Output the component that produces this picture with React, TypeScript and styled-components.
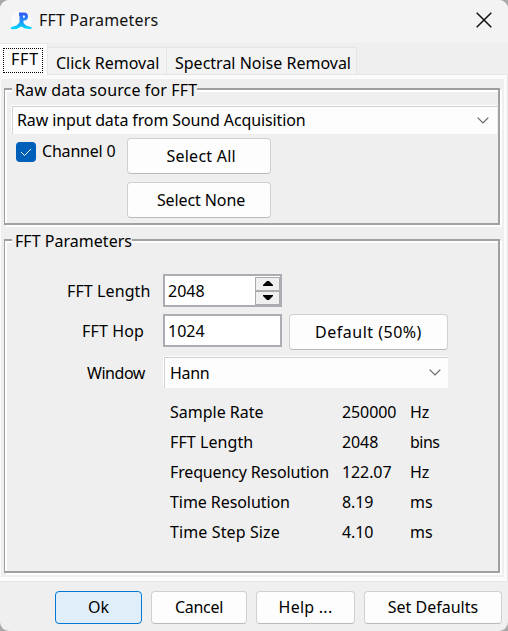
import React from "react";
import styled, { createGlobalStyle, css } from "styled-components";

const Global = createGlobalStyle`
  * { box-sizing: border-box; }
  html, body { margin: 0; padding: 0; background: #a9a9a9; }
  body { font: 16px/20px "Noto Sans", "DejaVu Sans Condensed", sans-serif; color: #000; }
  button { font: inherit; color: inherit; }
`;

const Dialog = styled.div`
  width: 508px;
  height: 631px;
  display: flex;
  flex-direction: column;
  background: #efefef;
  border-radius: 9px;
  overflow: hidden;
`;

const Text = styled.span<{ $track?: number }>`
  white-space: pre;
  letter-spacing: ${(p) => p.$track ?? 0}px;
`;

const TitleBar = styled.header`
  height: 43px;
  flex: none;
  display: flex;
  align-items: center;
  padding: 0 16px 3px 11px;
  background: #f3f3f3;
`;

const Title = styled(Text)`
  flex: 1;
  margin-left: 7px;
  color: #111;
`;

const Tabs = styled.nav`
  height: 32px;
  flex: none;
  display: flex;
  align-items: flex-end;
  padding-top: 1px;
  border-bottom: 1px solid #e5e5e5;
`;

const Tab = styled.div<{ $w: number; $active?: boolean }>`
  width: ${(p) => p.$w}px;
  height: 27px;
  display: flex;
  align-items: center;
  padding: 3px 0 0 8px;
  background: #f3f3f3;
  border: 1px solid #e5e5e5;
  border-width: 1px 1px 0 0;
  ${(p) =>
    p.$active &&
    css`
      height: 32px;
      margin-bottom: -1px;
      padding: 2px 0 0 3px;
      background: #fbfbfb;
    `}
`;

const Focus = styled.div`
  width: 40px;
  height: 25px;
  padding: 0 0 0 7px;
  border: 1px dotted #000;
`;

const Pane = styled.main`
  height: 507px;
  flex: none;
  padding: 4px 3px 4px 1px;
  background: #fbfbfb;
  border-right: 1px solid #e5e5e5;
  border-bottom: 1px solid #e5e5e5;
`;

const PaneBody = styled.div`
  height: 498px;
  padding: 9px 4px 0 3px;
  background: #efefef;
`;

const Group = styled.section<{ $h: number }>`
  width: 496px;
  height: ${(p) => p.$h}px;
  margin-bottom: 14px;
  border: 2px solid #a0a0a0;
  border-left-width: 1px;
  box-shadow: 2px 2px 0 #fff, inset 2px 2px 0 #fff;
`;

const Legend = styled.div<{ $w: number }>`
  width: ${(p) => p.$w}px;
  height: 20px;
  margin: -10px 0 0 7px;
  padding-left: 3px;
  background: #efefef;
`;

const Button = styled.button<{ $w: number; $h?: number; $primary?: boolean }>`
  width: ${(p) => p.$w}px;
  height: ${(p) => p.$h ?? 36}px;
  flex: none;
  display: flex;
  align-items: center;
  justify-content: center;
  padding: 0 0 1px;
  background: ${(p) => (p.$primary ? "#e0eef9" : "#fdfdfd")};
  border: 1px solid ${(p) => (p.$primary ? "#0078d4" : "#d0d0d0")};
  border-bottom-color: ${(p) => (p.$primary ? "#0078d4" : "#bbb")};
  border-radius: 4px;
`;

const Combo = styled.div<{ $w: number; $h: number }>`
  width: ${(p) => p.$w}px;
  height: ${(p) => p.$h}px;
  flex: none;
  display: flex;
  align-items: center;
  justify-content: space-between;
  padding: 0 7px 1px 5px;
  background: #fdfdfd;
  border: 1px solid #d0d0d0;
  border-width: 1px 0 0 1px;
  box-shadow: -1px -1px 0 #fff;
`;

const SourceCombo = styled(Combo)`
  margin: 6px 0 0 7px;
  padding-left: 4px;
  padding-right: 8px;
`;

const WindowCombo = styled(Combo)`
  margin-left: 1px;
`;

const SourceRow = styled.div`
  display: flex;
  align-items: flex-start;
  margin: 4px 0 0 11px;
`;

const Check = styled.span`
  width: 20px;
  height: 20px;
  display: grid;
  place-items: center;
  margin-top: 4px;
  background: #005fb8;
  border-radius: 4px;
`;

const CheckLabel = styled(Text)`
  width: 85px;
  margin: 3px 0 0 6px;
`;

const ButtonStack = styled.div`
  display: flex;
  flex-direction: column;
  gap: 8px;
`;

const Form = styled.div`
  display: grid;
  grid-template-rows: 33px 36px 32px;
  row-gap: 7px;
  margin-top: 23px;
`;

const FormRow = styled.div`
  display: flex;
  align-items: flex-start;
`;

const FormLabel = styled(Text)<{ $x: number; $top: number }>`
  width: ${(p) => 158 - p.$x}px;
  margin: ${(p) => p.$top}px 0 0 ${(p) => p.$x}px;
`;

const Field = styled.div`
  width: 119px;
  height: 33px;
  display: flex;
  align-items: center;
  justify-content: space-between;
  margin-right: 7px;
  padding: 0 0 0 3px;
  background: #fff;
  border: 2px solid #abadb3;
`;

const Spinner = styled.div`
  width: 25px;
  display: flex;
  flex-direction: column;
`;

const SpinButton = styled.div`
  height: 14px;
  display: grid;
  place-items: center;
  background: #f0f0f0;
  border: 1px solid #acacac;
`;

const Stats = styled.div`
  display: grid;
  grid-template-columns: 172px 68px 60px;
  grid-auto-rows: 30px;
  align-items: center;
  margin: 8px 0 0 165px;
`;

const Footer = styled.footer`
  display: flex;
  gap: 9px;
  padding: 9px 0 0 55px;
`;

const Chevron = () => (
  <svg width="12" height="7" viewBox="0 0 12 7" fill="none" stroke="#666" strokeWidth="1.2">
    <path d="M.7 .7 6 6 11.3 .7" />
  </svg>
);

const Arrow = ({ down }: { down?: boolean }) => (
  <svg width="10" height="5" viewBox="0 0 10 5">
    <path d={down ? "M0 0H10V1L6 5H4L0 1Z" : "M0 5H10V4L6 0H4L0 4Z"} />
  </svg>
);

const AppLogo = () => (
  <svg width="21" height="21" viewBox="0 0 21 21">
    <defs>
      <linearGradient id="logo" x1="0" y1="0" x2="0" y2="1">
        <stop offset="0" stopColor="#3558f5" />
        <stop offset="0.6" stopColor="#1c9cfb" />
        <stop offset="1" stopColor="#00e1ff" />
      </linearGradient>
    </defs>
    <circle cx="10.5" cy="10.5" r="10.3" fill="#fafafa" />
    <path
      fill="url(#logo)"
      fillRule="evenodd"
      d="M8 2.5H13Q17 2.5 17 6.5Q17 10.5 13 10.5H12.5V13L15 15.5L20.5 17.2V19Q14 19.5 10.2 16.5Q6 20 0 19V17.2L5.5 15.5L8.5 12.5V6H8ZM12 5.5V7.8H13Q14 7.8 14 6.6T13 5.5Z"
    />
  </svg>
);

const stats: [string, string, string, number, number][] = [
  ["Sample Rate", "250000", "Hz", 0, 0],
  ["FFT Length", "2048", "bins", 0.08, -0.5],
  ["Frequency Resolution", "122.07", "Hz", -0.15, 0],
  ["Time Resolution", "8.19", "ms", -0.07, 0],
  ["Time Step Size", "4.10", "ms", 0.12, 0],
];

export default function App() {
  return (
    <>
      <Global />
      <Dialog>
        <TitleBar>
          <AppLogo />
          <Title $track={0.2}>FFT Parameters</Title>
          <svg width="16" height="16" viewBox="0 0 16 16" stroke="#111" strokeWidth="1.5">
            <path d="M.7 .7 15.3 15.3M15.3 .7 .7 15.3" />
          </svg>
        </TitleBar>
        <Tabs>
          <Tab $w={48} $active>
            <Focus><Text $track={0.8}>FFT</Text></Focus>
          </Tab>
          <Tab $w={119}><Text>Click Removal</Text></Tab>
          <Tab $w={190}><Text>Spectral Noise Removal</Text></Tab>
        </Tabs>
        <Pane>
          <PaneBody>
            <Group $h={137}>
              <Legend $w={185}><Text $track={0.13}>Raw data source for FFT</Text></Legend>
              <SourceCombo $w={485} $h={28}>
                <Text $track={-0.12}>Raw input data from Sound Acquisition</Text>
                <Chevron />
              </SourceCombo>
              <SourceRow>
                <Check>
                  <svg width="12" height="10" viewBox="0 0 12 10" fill="none" stroke="#fff" strokeWidth="1">
                    <path d="M1 5 4.5 8.5 11 2" />
                  </svg>
                </Check>
                <CheckLabel $track={-0.2}>Channel 0</CheckLabel>
                <ButtonStack>
                  <Button $w={144}><Text $track={0.25}> Select All</Text></Button>
                  <Button $w={144}><Text $track={-0.1}> Select None</Text></Button>
                </ButtonStack>
              </SourceRow>
            </Group>
            <Group $h={334}>
              <Legend $w={120}><Text $track={0.03}>FFT Parameters</Text></Legend>
              <Form>
                <FormRow>
                  <FormLabel $x={62} $top={7} $track={0.1}>FFT Length</FormLabel>
                  <Field>
                    <Text>2048</Text>
                    <Spinner>
                      <SpinButton><Arrow /></SpinButton>
                      <SpinButton><Arrow down /></SpinButton>
                    </Spinner>
                  </Field>
                </FormRow>
                <FormRow>
                  <FormLabel $x={77} $top={7} $track={0.15}>FFT Hop</FormLabel>
                  <Field><Text>1024</Text></Field>
                  <Button $w={159}><Text $track={0.5}>Default (50%)</Text></Button>
                </FormRow>
                <FormRow>
                  <FormLabel $x={82} $top={6} $track={-0.45}>Window</FormLabel>
                  <WindowCombo $w={284} $h={31}>
                    <Text $track={-0.3}>Hann</Text>
                    <Chevron />
                  </WindowCombo>
                </FormRow>
              </Form>
              <Stats>
                {stats.map(([name, value, unit, track, unitTrack]) => (
                  <React.Fragment key={name}>
                    <Text $track={track}>{name}</Text>
                    <Text $track={-0.1}>{value}</Text>
                    <Text $track={unitTrack}>{unit}</Text>
                  </React.Fragment>
                ))}
              </Stats>
            </Group>
          </PaneBody>
        </Pane>
        <Footer>
          <Button $w={87} $h={33} $primary><Text>Ok</Text></Button>
          <Button $w={96} $h={33}><Text $track={-0.3}>Cancel</Text></Button>
          <Button $w={99} $h={33}><Text $track={0.25}>Help ...</Text></Button>
          <Button $w={138} $h={33}><Text>Set Defaults</Text></Button>
        </Footer>
      </Dialog>
    </>
  );
}
